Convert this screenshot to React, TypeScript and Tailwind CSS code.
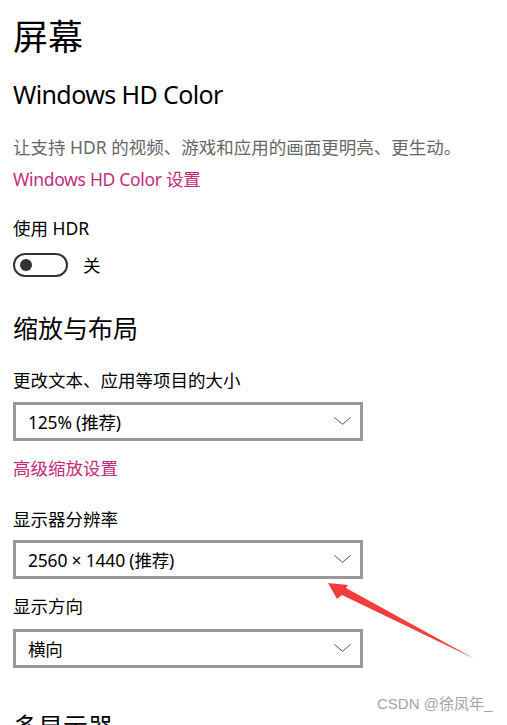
import React from 'react';

const font = "font-['Noto_Sans','Noto_Sans_CJK_SC',sans-serif]";

const Chevron: React.FC = () => (
  <svg width="17" height="8" viewBox="0 0 17 8" fill="none" className="shrink-0 mt-[-2px]">
    <polyline points="0.5,0.5 8.5,7.3 16.5,0.5" stroke="#555" strokeWidth="1" />
  </svg>
);

const Select: React.FC<{ value: string; className?: string }> = ({ value, className = '' }) => (
  <div
    className={`w-[350px] h-[39px] border-[3px] border-[#999] bg-white flex items-center justify-between pl-[12px] pr-[9px] ${className}`}
  >
    <span className="text-[17.5px] leading-[24px] tracking-[-0.2px] text-black">{value}</span>
    <Chevron />
  </div>
);

export default function App() {
  return (
    <div className={`relative w-[507px] h-[725px] overflow-hidden bg-white ${font}`}>
      <div className="flex flex-col items-start pl-[13px] pt-[17px]">
        {/* Header */}
        <h1 className="text-[35px] leading-[40px] text-black">屏幕</h1>

        <h2 className="mt-[21px] text-[25px] leading-[32px] tracking-[-0.6px] text-black">Windows HD Color</h2>
        <p className="mt-[25px] text-[17.5px] leading-[24px] text-[#666]">
          让支持 HDR 的视频、游戏和应用的画面更明亮、更生动。
        </p>
        <a className="mt-[8px] text-[17.5px] leading-[24px] tracking-[-0.3px] text-[#c42b7e]">Windows HD Color 设置</a>

        <div className="mt-[25px] text-[17.5px] leading-[24px] text-black">使用 HDR</div>
        <div className="mt-[13px] flex items-center gap-[15px]">
          <div className="w-[55px] h-[24px] rounded-full border-2 border-[#333] flex items-center pl-[5px]">
            <div className="w-[12px] h-[12px] rounded-full bg-[#333]" />
          </div>
          <span className="text-[17.5px] leading-[24px] text-black">关</span>
        </div>

        {/* Scale and layout */}
        <h2 className="mt-[35px] text-[25px] leading-[32px] text-black">缩放与布局</h2>
        <div className="mt-[24px] text-[17.5px] leading-[24px] text-black">更改文本、应用等项目的大小</div>
        <Select value="125% (推荐)" className="mt-[10px]" />
        <a className="mt-[15px] text-[17.5px] leading-[24px] text-[#c42b7e]">高级缩放设置</a>

        <div className="mt-[27px] text-[17.5px] leading-[24px] text-black">显示器分辨率</div>
        <Select value="2560 × 1440 (推荐)" className="mt-[9px]" />

        <div className="mt-[15px] text-[17.5px] leading-[24px] text-black">显示方向</div>
        <Select value="横向" className="mt-[11px]" />

        <h2 className="mt-[42px] text-[25px] leading-[32px] text-black">多显示器</h2>
      </div>

      {/* annotation arrow */}
      <svg
        className="absolute left-0 top-0 pointer-events-none"
        width="507"
        height="725"
        viewBox="0 0 507 725"
      >
        <polygon
          points="328,583 348,585 346,588 475,659 342,595 337,599"
          fill="#f53c3c"
        />
      </svg>

      {/* watermark */}
      <div className="absolute left-[377px] top-[694px] text-[15px] leading-[20px] text-[#a3a3a3] font-['Liberation_Sans','Noto_Sans_CJK_SC',sans-serif] whitespace-nowrap">
        CSDN @徐凤年_
      </div>
    </div>
  );
}
